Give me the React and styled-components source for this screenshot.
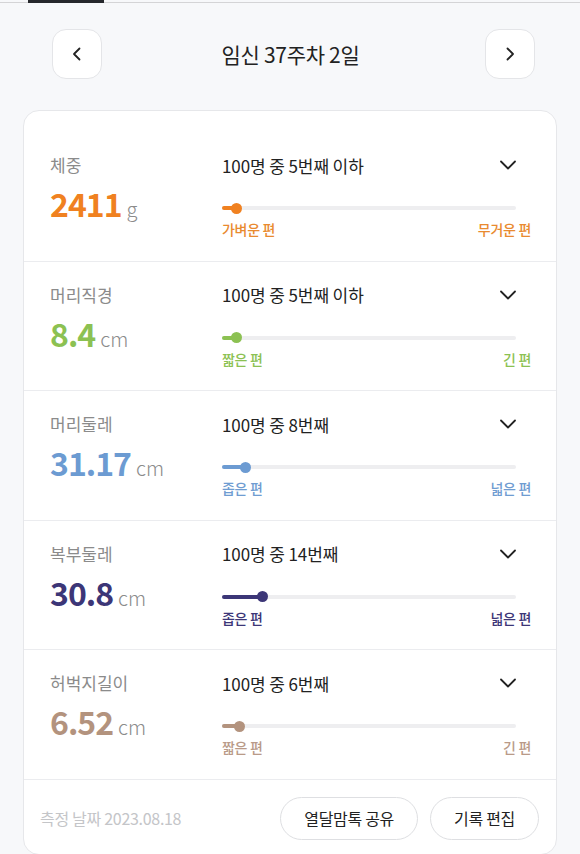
import React from "react";
import styled, { createGlobalStyle } from "styled-components";

const GlobalStyle = createGlobalStyle`
  html, body {
    margin: 0;
    padding: 0;
    background: #f7f8fa;
    font-family: "Noto Sans CJK KR", "Noto Sans", sans-serif;
    color: #222;
  }
  * { box-sizing: border-box; }
`;

const Page = styled.div`
  width: 580px;
  height: 854px;
  overflow: hidden;
  background: #f7f8fa;
`;

const TabStrip = styled.div`
  display: flex;
  height: 3px;
  padding-left: 28px;
  box-shadow: inset 0 -1px 0 #d4d4d6;
`;

const ActiveTab = styled.div`
  width: 76px;
  height: 3px;
  background: #26282c;
`;

const Header = styled.div`
  display: flex;
  align-items: center;
  justify-content: space-between;
  padding: 26px 45px 0 52px;
`;

const NavButton = styled.button`
  width: 50px;
  height: 50px;
  display: flex;
  align-items: center;
  justify-content: center;
  background: #fff;
  border: 1px solid #e4e5e8;
  border-radius: 14px;
  padding: 0;
  cursor: pointer;
`;

const Title = styled.h1`
  margin: 0 6px 0 0;
  font-size: 21px;
  font-weight: 400;
  letter-spacing: -0.3px;
  color: #222;
`;

const Card = styled.div`
  margin: 31px 23px 0;
  background: #fff;
  border: 1px solid #e6e7ea;
  border-radius: 16px;
  padding-top: 21px;
`;

const Row = styled.div`
  display: grid;
  grid-template-columns: 172px 1fr;
  padding: 22px 25px 22px 26px;
  border-bottom: 1px solid #ebecef;
`;

const Left = styled.div`
  display: flex;
  flex-direction: column;
`;

const Label = styled.div`
  font-size: 17px;
  line-height: 22px;
  color: #8b8b8b;
`;

const Value = styled.div`
  margin-top: 7px;
  line-height: 40px;
  display: flex;
  align-items: baseline;
`;

const Number = styled.span`
  font-size: 32px;
  font-weight: 700;
  letter-spacing: -1px;
  color: ${(p) => p.$color};
`;

const Unit = styled.span`
  margin-left: 5px;
  font-size: 20px;
  font-weight: 300;
  color: #8b8b8b;
`;

const Right = styled.div`
  display: flex;
  flex-direction: column;
`;

const RankRow = styled.div`
  display: flex;
  align-items: center;
  justify-content: space-between;
  height: 22px;
  padding-right: 14px;
`;

const Rank = styled.span`
  font-size: 17px;
  letter-spacing: -0.1px;
  color: #222;
`;

const TrackWrap = styled.div`
  position: relative;
  margin-top: 26px;
  margin-right: 15px;
  height: 12px;
  display: flex;
  align-items: center;
`;

const Track = styled.div`
  flex: 1;
  height: 4px;
  border-radius: 2px;
  background: #eeeef0;
`;

const Fill = styled.div`
  position: absolute;
  left: 0;
  top: 4px;
  height: 4px;
  border-radius: 2px;
  background: ${(p) => p.$color};
`;

const Knob = styled.div`
  position: absolute;
  top: 0.5px;
  width: 11px;
  height: 11px;
  margin-left: -5.5px;
  border-radius: 50%;
  background: ${(p) => p.$color};
`;

const Ends = styled.div`
  margin-top: 6px;
  display: flex;
  justify-content: space-between;
  font-size: 14px;
  line-height: 18.5px;
  font-weight: 500;
  letter-spacing: -0.3px;
  color: ${(p) => p.$color};
`;

const Footer = styled.div`
  display: flex;
  align-items: center;
  justify-content: space-between;
  padding: 17px 17px 14px 16px;
`;

const DateText = styled.span`
  font-size: 16px;
  color: #c4c5c8;
  letter-spacing: -0.3px;
`;

const Actions = styled.div`
  display: flex;
  gap: 12px;
`;

const PillButton = styled.button`
  height: 43px;
  padding: 0 23px;
  border-radius: 22px;
  border: 1px solid #dedfe2;
  background: #fff;
  font-family: inherit;
  font-size: 16px;
  letter-spacing: -0.3px;
  color: #222;
  cursor: pointer;
`;

const ChevronLeft = () => (
  <svg width="16" height="16" viewBox="0 0 16 16" fill="none">
    <path d="M10.5 2.5 5 8l5.5 5.5" stroke="#222" strokeWidth="1.8" strokeLinecap="round" strokeLinejoin="round" />
  </svg>
);

const ChevronRight = () => (
  <svg width="16" height="16" viewBox="0 0 16 16" fill="none">
    <path d="M5.5 2.5 11 8l-5.5 5.5" stroke="#222" strokeWidth="1.8" strokeLinecap="round" strokeLinejoin="round" />
  </svg>
);

const ChevronDown = () => (
  <svg width="18" height="12" viewBox="0 0 18 12" fill="none">
    <path d="M2 2.5 9 9.5l7-7" stroke="#222" strokeWidth="1.8" strokeLinecap="round" strokeLinejoin="round" />
  </svg>
);

const rows = [
  { label: "체중", value: "2411", unit: "g", rank: "100명 중 5번째 이하", pos: 14, color: "#f08120", end: "#e98a2f", low: "가벼운 편", high: "무거운 편" },
  { label: "머리직경", value: "8.4", unit: "cm", rank: "100명 중 5번째 이하", pos: 14, color: "#8cc152", end: "#8cc152", low: "짧은 편", high: "긴 편" },
  { label: "머리둘레", value: "31.17", unit: "cm", rank: "100명 중 8번째", pos: 23, color: "#6c9bd2", end: "#6f9cd1", low: "좁은 편", high: "넓은 편" },
  { label: "복부둘레", value: "30.8", unit: "cm", rank: "100명 중 14번째", pos: 40, color: "#3c3677", end: "#3c3677", low: "좁은 편", high: "넓은 편" },
  { label: "허벅지길이", value: "6.52", unit: "cm", rank: "100명 중 6번째", pos: 17, color: "#b3937e", end: "#b99a88", low: "짧은 편", high: "긴 편" },
];

export default function App() {
  return (
    <Page>
      <GlobalStyle />
      <TabStrip>
        <ActiveTab />
      </TabStrip>
      <Header>
        <NavButton aria-label="이전">
          <ChevronLeft />
        </NavButton>
        <Title>임신 37주차 2일</Title>
        <NavButton aria-label="다음">
          <ChevronRight />
        </NavButton>
      </Header>
      <Card>
        {rows.map((r) => (
          <Row key={r.label}>
            <Left>
              <Label>{r.label}</Label>
              <Value>
                <Number $color={r.color}>{r.value}</Number>
                <Unit>{r.unit}</Unit>
              </Value>
            </Left>
            <Right>
              <RankRow>
                <Rank>{r.rank}</Rank>
                <ChevronDown />
              </RankRow>
              <TrackWrap>
                <Track />
                <Fill $color={r.color} style={{ width: r.pos }} />
                <Knob $color={r.color} style={{ left: r.pos }} />
              </TrackWrap>
              <Ends $color={r.end}>
                <span>{r.low}</span>
                <span>{r.high}</span>
              </Ends>
            </Right>
          </Row>
        ))}
        <Footer>
          <DateText>측정 날짜 2023.08.18</DateText>
          <Actions>
            <PillButton>열달맘톡 공유</PillButton>
            <PillButton>기록 편집</PillButton>
          </Actions>
        </Footer>
      </Card>
    </Page>
  );
}
